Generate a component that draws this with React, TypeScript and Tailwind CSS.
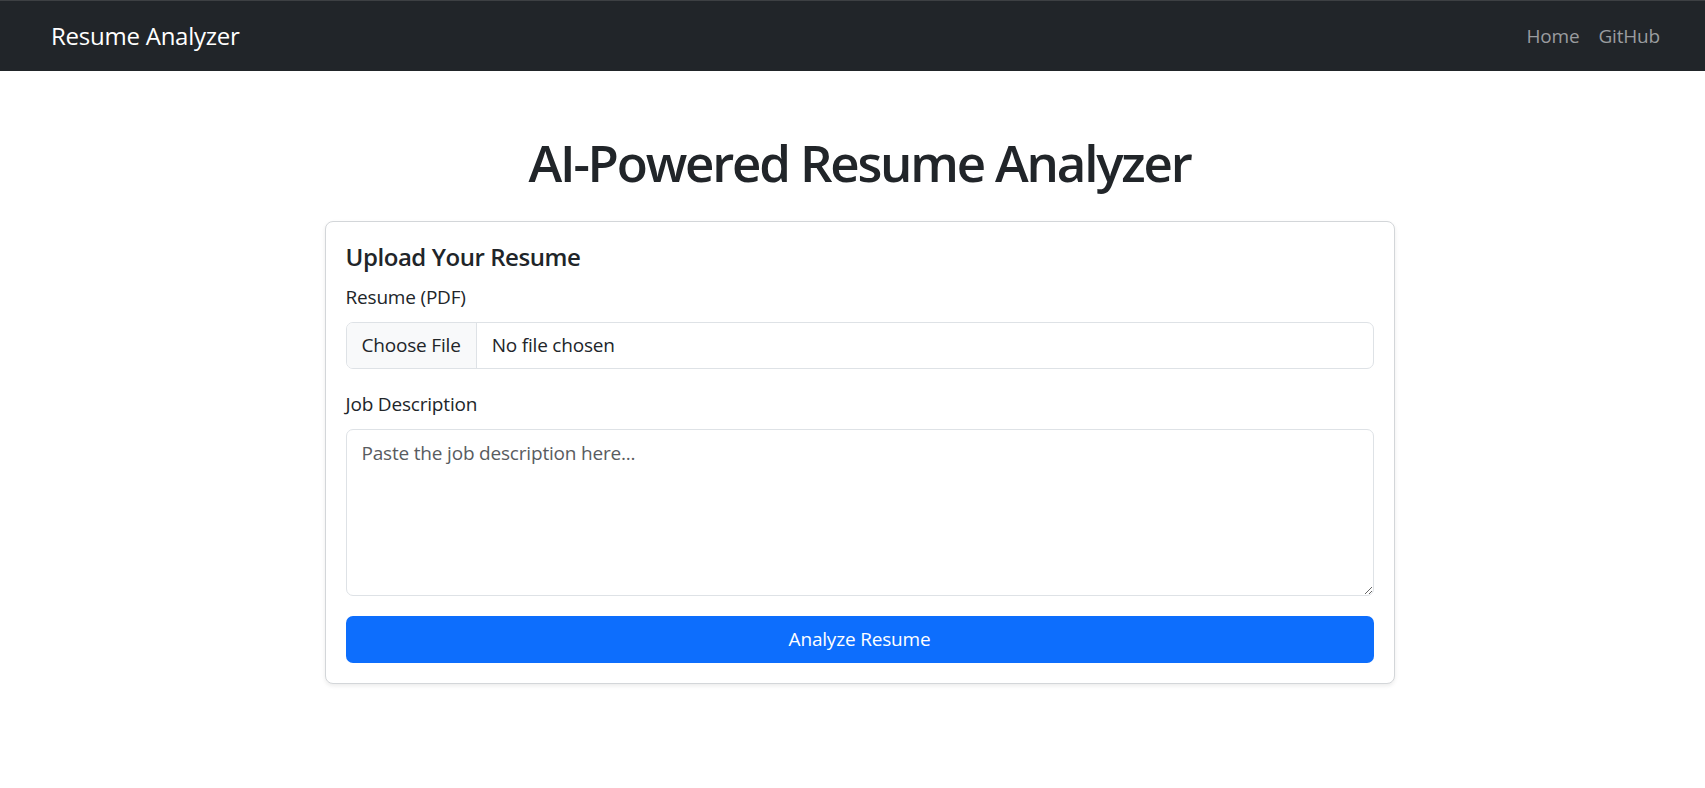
import React from "react";

const font = { fontFamily: '"Open Sans", "Noto Sans", sans-serif' };

const App = () => {
  return (
    <div className="min-h-[788px] bg-white text-[#212529]" style={font}>
      <nav className="flex h-[71px] items-center justify-between border-t border-[#3d4043] bg-[#212529] pl-[51px] pr-[45px]">
        <a href="#" className="text-[24px] leading-none tracking-[-0.01em] text-white">
          Resume Analyzer
        </a>
        <div className="flex items-center gap-[19px] text-[19px] leading-none tracking-[-0.01em] text-[#9a9c9f]">
          <a href="#">Home</a>
          <a href="#">GitHub</a>
        </div>
      </nav>

      <main className="flex flex-col items-center pl-[14px]">
        <h1 className="mt-[59px] text-[51px] font-semibold leading-[65px] tracking-[-0.043em]">
          AI-Powered Resume Analyzer
        </h1>

        <div className="mt-[26px] w-[1070px] rounded-[8px] border border-[#d3d6d9] bg-white p-[20px] text-[19px] tracking-[-0.01em] shadow-[0_2px_4px_rgba(0,0,0,0.08)]">
          <h5 className="mb-[10px] text-[24px] font-semibold leading-[30px] tracking-[-0.018em]">
            Upload Your Resume
          </h5>

          <label className="mb-[10px] block leading-[30px]">Resume (PDF)</label>
          <div className="mb-[20px] flex h-[47px] items-stretch overflow-hidden rounded-[7px] border border-[#dee2e6]">
            <div className="flex items-center border-r border-[#dee2e6] bg-[#f8f9fa] px-[15px]">
              Choose File
            </div>
            <div className="flex items-center px-[15px]">No file chosen</div>
          </div>

          <label className="mb-[10px] block leading-[30px]">Job Description</label>
          <textarea
            rows={5}
            placeholder="Paste the job description here..."
            className="mb-[20px] block h-[167px] w-full rounded-[7px] border border-[#dee2e6] px-[15px] py-[8px] leading-[30px] outline-none placeholder:text-[#595c5f]"
          />

          <button className="flex h-[47px] w-full items-center justify-center rounded-[7px] bg-[#0d6efd] text-white">
            Analyze Resume
          </button>
        </div>
      </main>
    </div>
  );
};

export default App;
